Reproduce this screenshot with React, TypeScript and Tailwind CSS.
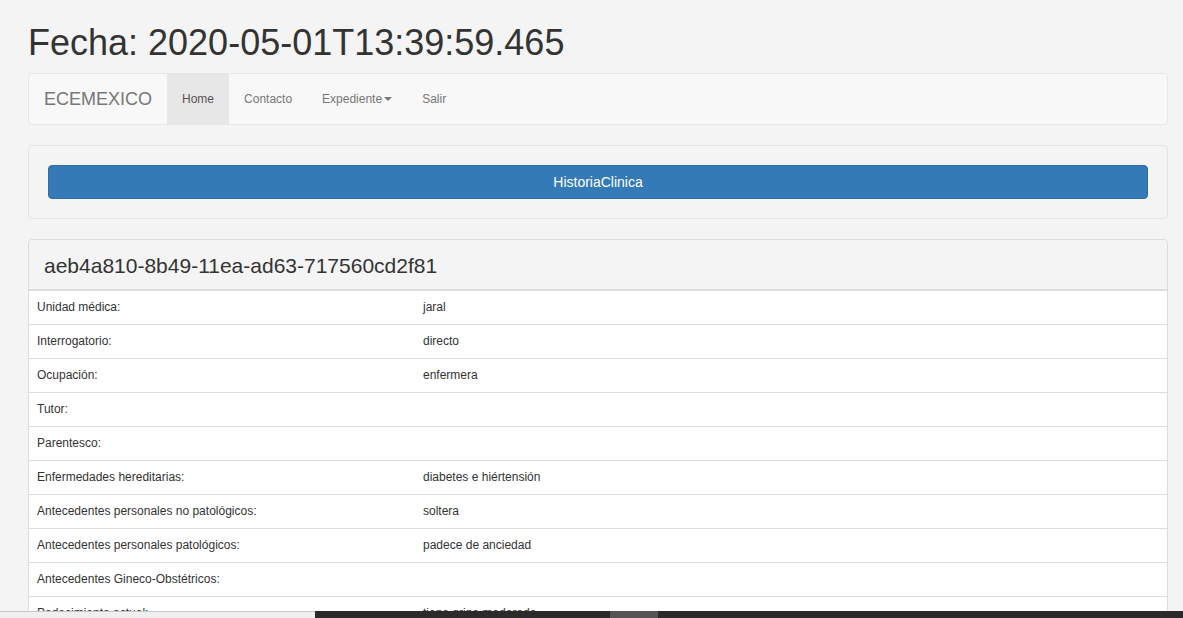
import React from "react";

const rows: [string, string][] = [
  ["Unidad médica:", "jaral"],
  ["Interrogatorio:", "directo"],
  ["Ocupación:", "enfermera"],
  ["Tutor:", ""],
  ["Parentesco:", ""],
  ["Enfermedades hereditarias:", "diabetes e hiértensión"],
  ["Antecedentes personales no patológicos:", "soltera"],
  ["Antecedentes personales patológicos:", "padece de anciedad"],
  ["Antecedentes Gineco-Obstétricos:", ""],
  ["Padecimiento actual:", "tiene gripe moderada"],
  ["Exploración física:", ""],
  ["Diagnóstico:", ""],
];

export default function App() {
  return (
    <div
      className="min-h-screen bg-[#f4f4f4] text-[#333] text-[12px]"
      style={{ fontFamily: '"Liberation Sans", Arial, Helvetica, sans-serif' }}
    >
      <div className="ml-[28px] w-[1140px] pt-[23px]">
        <h1 className="text-[36px] leading-[40px] mb-[10px] font-normal">
          Fecha: 2020-05-01T13:39:59.465
        </h1>

        <nav className="h-[52px] bg-[#f8f8f8] border border-[#e7e7e7] rounded-[4px] flex items-stretch mb-[20px]">
          <div className="px-[15px] flex items-center text-[18px] text-[#777]">ECEMEXICO</div>
          <div className="px-[15px] flex items-center bg-[#e7e7e7] text-[#555]">Home</div>
          <div className="px-[15px] flex items-center text-[#777]">Contacto</div>
          <div className="px-[15px] flex items-center text-[#777]">
            Expediente
            <span className="ml-[2px] inline-block w-0 h-0 border-t-[4px] border-t-[#777] border-x-[4px] border-x-transparent" />
          </div>
          <div className="px-[15px] flex items-center text-[#777]">Salir</div>
        </nav>

        <div className="bg-[#f4f4f4] border border-[#e3e3e3] rounded-[4px] p-[19px] mb-[20px]">
          <button className="w-full h-[34px] bg-[#337ab7] border border-[#2e6da4] rounded-[4px] text-white text-[14px] flex items-center justify-center">
            HistoriaClinica
          </button>
        </div>

        <div className="border border-[#ddd] rounded-[4px] bg-white">
          <div className="h-[49px] bg-[#f4f4f4] px-[15px] flex items-center pt-[3px] text-[21px] rounded-t-[4px]">
            aeb4a810-8b49-11ea-ad63-717560cd2f81
          </div>
          <div className="border-t-2 border-[#ddd]">
            {rows.map(([k, v], i) => (
              <div
                key={k}
                className={`grid grid-cols-[386px_1fr] ${i === 0 ? "" : "border-t border-[#ddd]"}`}
              >
                <div className="p-[8px] leading-[17px]">{k}</div>
                <div className="p-[8px] leading-[17px]">{v}</div>
              </div>
            ))}
          </div>
        </div>
      </div>

      <div className="fixed bottom-0 left-0 right-0 h-[7px] flex">
        <div className="w-[315px] bg-[#f0f0f0] border-t border-[#c8c8c8]" />
        <div className="w-[295px] bg-[#2b2b2b]" />
        <div className="w-[48px] bg-[#555]" />
        <div className="flex-1 bg-[#2b2b2b]" />
      </div>
    </div>
  );
}
